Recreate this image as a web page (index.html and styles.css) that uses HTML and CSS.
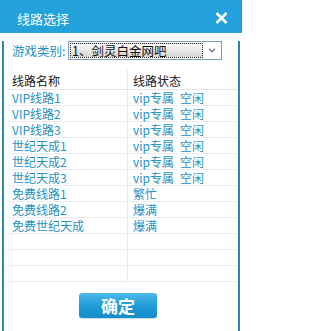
FILE: index.html
```html
<!DOCTYPE html>
<html>
<head>
<meta charset="utf-8">
<link rel="stylesheet" href="styles.css">
</head>
<body>
<div class="window">
  <div class="titlebar">
    <span class="title">线路选择</span>
    <svg class="close" width="13" height="12" viewBox="0 0 13 12"><path d="M1.5 1 L11.5 11 M11.5 1 L1.5 11" stroke="#fff" stroke-width="2.6" fill="none"/></svg>
  </div>
  <div class="frame">
    <div class="selrow">
      <span class="label">游戏类别:</span>
      <div class="select">
        <div class="selval">1、剑灵白金网吧</div>
        <div class="arrow"><svg width="8" height="5" viewBox="0 0 8 5"><path d="M1 0.8 L4 3.8 L7 0.8" stroke="#6a7f96" stroke-width="1.4" fill="none"/></svg></div>
      </div>
    </div>
    <div class="table">
      <div class="row head"><div class="c1">线路名称</div><div class="c2">线路状态</div></div>
      <div class="row"><div class="c1">VIP线路1</div><div class="c2">vip专属&ensp;空闲</div></div>
      <div class="row"><div class="c1">VIP线路2</div><div class="c2">vip专属&ensp;空闲</div></div>
      <div class="row"><div class="c1">VIP线路3</div><div class="c2">vip专属&ensp;空闲</div></div>
      <div class="row"><div class="c1">世纪天成1</div><div class="c2">vip专属&ensp;空闲</div></div>
      <div class="row"><div class="c1">世纪天成2</div><div class="c2">vip专属&ensp;空闲</div></div>
      <div class="row"><div class="c1">世纪天成3</div><div class="c2">vip专属&ensp;空闲</div></div>
      <div class="row"><div class="c1">免费线路1</div><div class="c2">繁忙</div></div>
      <div class="row"><div class="c1">免费线路2</div><div class="c2">爆满</div></div>
      <div class="row"><div class="c1">免费世纪天成</div><div class="c2">爆满</div></div>
      <div class="row"><div class="c1"></div><div class="c2"></div></div>
      <div class="row"><div class="c1"></div><div class="c2"></div></div>
      <div class="row"><div class="c1"></div><div class="c2"></div></div>
    </div>
    <div class="btnrow"><button class="ok">确定</button></div>
  </div>
</div>
</body>
</html>
```
FILE: styles.css
```css
* { box-sizing: border-box; }
body {
  margin: 0;
  background: #fff;
  font-family: "Noto Sans CJK SC", "Noto Sans", sans-serif;
  font-size: 12px;
}
.window { width: 242px; height: 331px; }
.titlebar {
  height: 33px;
  background: #22a1da;
  display: flex;
  align-items: center;
  justify-content: space-between;
  padding: 4px 14px 0 17px;
}
.title { color: #fff; font-size: 13px; line-height: 16px; }
.close { display: block; margin-top: -2px; }
.frame {
  margin: 0 2px;
  height: 295px;
  border: 2px solid #2f87ae;
  border-top: none;
}
.selrow {
  margin-top: 8px;
  height: 19px;
  display: flex;
  align-items: center;
  padding-left: 8px;
}
.label { color: #2592c4; font-size: 12.5px; width: 56px; line-height: 19px; }
.select {
  width: 154px;
  height: 19px;
  border: 1px solid #7f9db9;
  display: flex;
  padding: 1px;
  background: #fff;
}
.selval {
  width: 133px;
  height: 15px;
  border: 1px dotted #333;
  background: linear-gradient(to bottom, #fbfbfb, #e4e4e4 60%, #d2d2d2);
  color: #111;
  font-size: 12.5px;
  line-height: 13px;
  padding-left: 1px;
  white-space: nowrap;
}
.arrow {
  flex: 1;
  display: flex;
  justify-content: center;
  align-items: center;
}
.table { margin: 10px 0 0 3px; }
.row {
  display: flex;
  height: 16px;
  border-bottom: 1px solid #e9ecee;
  color: #2592c4;
  line-height: 16px;
}
.row.head {
  height: 20px;
  line-height: 21px;
  color: #1a1a1a;
  border-bottom-color: #e3e6e8;
}
.c1 {
  width: 121px;
  padding-left: 5px;
  border-right: 1px solid #e6e8ea;
  white-space: nowrap;
}
.c2 { flex: 1; padding-left: 5px; white-space: nowrap; }
.btnrow { margin-top: 11px; padding-left: 75px; }
.ok {
  width: 78px;
  height: 25px;
  border: none;
  border-radius: 3px;
  background: linear-gradient(to bottom, #4cbaeb, #1d9ad6 55%, #138ccb);
  color: #fff;
  font-family: "Noto Sans CJK SC", sans-serif;
  font-size: 17px;
  font-weight: bold;
  line-height: 25px;
  padding: 0;
  box-shadow: 0 1px 1px rgba(0,0,0,0.15);
}
```
